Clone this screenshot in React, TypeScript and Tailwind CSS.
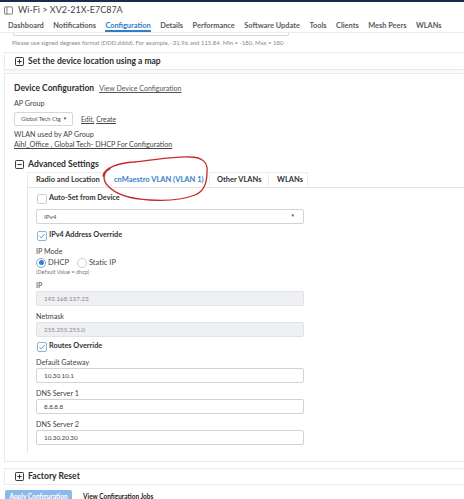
import React from 'react';

const tabs = ['Dashboard', 'Notifications', 'Configuration', 'Details', 'Performance', 'Software Update', 'Tools', 'Clients', 'Mesh Peers', 'WLANs'];

function Check({ checked }: { checked?: boolean }) {
  return (
    <span
      className={`w-[10px] h-[10px] rounded-[2px] border bg-white flex items-center justify-center shrink-0 ${
        checked ? 'border-[#8fb3d9]' : 'border-[#c9cfd6]'
      }`}
    >
      {checked && (
        <svg viewBox="0 0 10 10" className="w-[8px] h-[8px]">
          <path d="M1.8 5.2 L4.1 7.4 L8.3 2.4" fill="none" stroke="#5b8fc7" strokeWidth="1.2" />
        </svg>
      )}
    </span>
  );
}

function BoxIcon({ minus }: { minus?: boolean }) {
  return (
    <svg viewBox="0 0 10 10" className="w-[9px] h-[9px] shrink-0">
      <rect x="0.6" y="0.6" width="8.8" height="8.8" rx="0.8" fill="none" stroke="#333" strokeWidth="1.1" />
      <path d="M2.6 5 H7.4" stroke="#333" strokeWidth="1.2" />
      {!minus && <path d="M5 2.6 V7.4" stroke="#333" strokeWidth="1.2" />}
    </svg>
  );
}

function Field({ label, value, disabled, first }: { label: string; value: string; disabled?: boolean; first?: boolean }) {
  return (
    <div className={first ? 'mt-[4px]' : 'mt-[5px]'}>
      <div className="text-[7.2px] leading-[11px] text-[#444]">{label}</div>
      <div
        className={`w-[268px] h-[15px] rounded-[2px] border px-[7px] flex items-center text-[6.3px] ${
          disabled ? 'bg-[#eff0f2] border-[#dfe2e6] text-[#8a8a8a]' : 'bg-white border-[#cfd4da] text-[#444]'
        }`}
      >
        {value}
      </div>
    </div>
  );
}

export default function App() {
  return (
    <div className="relative w-[464px] h-[499px] overflow-hidden bg-white font-['Lato',sans-serif] text-[#333] whitespace-nowrap">
      <div className="h-[2px] bg-[#1b2b4b]" />

      {/* title */}
      <div className="h-[16px] flex items-center pl-[4px] gap-[5px]">
        <svg viewBox="0 0 10 10" className="w-[9px] h-[9px]">
          <rect x="0.6" y="1" width="8.8" height="8" rx="0.6" fill="none" stroke="#666" strokeWidth="0.9" />
          <path d="M3.3 1 V9" stroke="#666" strokeWidth="0.9" />
        </svg>
        <span className="text-[9px] text-[#444]">Wi-Fi &gt; XV2-21X-E7C87A</span>
      </div>

      {/* top tabs */}
      <div className="h-[15px] flex gap-[9.5px] pl-[8px] border-b border-[#ededed]">
        {tabs.map((t) => (
          <div
            key={t}
            className={`h-full flex items-start pt-[2px] text-[7.4px] font-bold ${
              t === 'Configuration' ? 'text-[#2f7cc7] border-b-[2px] border-[#2f7cc7]' : 'text-[#5a5a5a]'
            }`}
          >
            {t}
          </div>
        ))}
      </div>

      {/* scrolled input remainder */}
      <div className="ml-[13px] w-[276px] h-[3px] border-l border-r border-b border-[#d4d8dc] rounded-b-[2px]" />
      <div className="pl-[12px] mt-[3px] text-[6px] leading-[8px] text-[#8a8a8a]">
        Please use signed degrees format (DDD.dddd). For example, -31.96 and 115.84. Min = -180, Max = 180
      </div>

      {/* map card */}
      <div className="ml-[4px] mt-[5px] h-[18px] border border-r-0 border-[#eaeaea] flex items-center gap-[4px] pl-[10px] shadow-[0_2px_3px_rgba(0,0,0,0.04)]">
        <BoxIcon />
        <span className="text-[8.5px] font-bold text-[#2e2e2e]">Set the device location using a map</span>
      </div>

      {/* device configuration card */}
      <div className="ml-[4px] mt-[3px] border border-r-0 border-[#eaeaea] pl-[9px] pt-[8px] pb-[8px]">
        <div className="flex items-baseline gap-[5px] leading-[12px]">
          <span className="text-[8.5px] font-bold text-[#2e2e2e]">Device Configuration</span>
          <span className="text-[7px] text-[#555] underline">View Device Configuration</span>
        </div>
        <div className="mt-[4px] text-[7.2px] leading-[11px] text-[#444]">AP Group</div>
        <div className="mt-[3px] flex items-center gap-[8px]">
          <div className="w-[59px] h-[14px] border border-[#d4d8dc] rounded-[2px] flex items-center pl-[6px] gap-[2px] text-[5.8px] text-[#555]">
            Global Tech Ctg <span className="text-[4.5px]">▼</span>
          </div>
          <span className="text-[6.8px] text-[#444] underline">Edit,</span>
          <span className="-ml-[6px] text-[6.8px] text-[#444] underline">Create</span>
        </div>
        <div className="mt-[4px] text-[7.2px] leading-[10px] text-[#444]">WLAN used by AP Group</div>
        <div className="text-[7.2px] leading-[10px] text-[#444] underline">Aihl_Office , Global Tech- DHCP For Configuration</div>

        <div className="mt-[8px] flex items-center gap-[4px] pl-[1px] leading-[12px]">
          <BoxIcon minus />
          <span className="text-[8.6px] font-bold text-[#2e2e2e]">Advanced Settings</span>
        </div>

        <div className="ml-[13px] mt-[2px]">
          {/* inner tabs */}
          <div className="h-[16px] flex border-b border-[#e4e4e4] text-[7.5px] font-bold">
            <div className="w-[79px] pl-[8px] flex items-center border-t border-l border-r border-[#ececec] text-[#333]">
              Radio and Location
            </div>
            <div className="w-[103px] pl-[8px] flex items-center text-[#3a80c6] bg-white">cnMaestro VLAN (VLAN 1)</div>
            <div className="w-[59px] pl-[7px] flex items-center border-t border-l border-[#ececec] text-[#333]">Other VLANs</div>
            <div className="w-[40px] pl-[8px] flex items-center border-t border-l border-r border-[#ececec] text-[#333]">WLANs</div>
          </div>

          {/* panel */}
          <div className="border-l border-[#e4e4e4] pl-[8px] pt-[5px] pb-[8px]">
            <div className="flex items-center gap-[2px] h-[11px] pl-[1px]">
              <Check />
              <span className="text-[7.3px] font-bold text-[#333]">Auto-Set from Device</span>
            </div>
            <div className="mt-[5px] w-[268px] h-[15px] border border-[#cfd4da] rounded-[2px] pl-[7px] pr-[8px] flex items-center justify-between text-[6.3px] text-[#555]">
              <span>IPv4</span>
              <span className="text-[4.5px]">▼</span>
            </div>
            <div className="mt-[6px] flex items-center gap-[2px] h-[11px] pl-[1px]">
              <Check checked />
              <span className="text-[7.3px] font-bold text-[#333]">IPv4 Address Override</span>
            </div>
            <div className="mt-[5px] text-[7.2px] leading-[11px] text-[#444]">IP Mode</div>
            <div className="h-[11px] flex items-center text-[7.5px] text-[#444]">
              <span className="w-[10px] h-[10px] rounded-full border border-[#7fa8d8] flex items-center justify-center">
                <span className="w-[5px] h-[5px] rounded-full bg-[#3f7ec4]" />
              </span>
              <span className="ml-[2px]">DHCP</span>
              <span className="ml-[8px] w-[10px] h-[10px] rounded-full border border-[#c9cfd6]" />
              <span className="ml-[2px]">Static IP</span>
            </div>
            <div className="text-[5.5px] leading-[8px] text-[#777]">(Default Value = dhcp)</div>

            <Field label="IP" value="192.168.137.23" disabled first />
            <Field label="Netmask" value="255.255.255.0" disabled />
            <div className="mt-[4px] flex items-center gap-[2px] h-[11px] pl-[1px]">
              <Check checked />
              <span className="text-[7.3px] font-bold text-[#333]">Routes Override</span>
            </div>
            <Field label="Default Gateway" value="10.30.10.1" />
            <Field label="DNS Server 1" value="8.8.8.8" />
            <Field label="DNS Server 2" value="10.30.20.30" />
          </div>
        </div>
      </div>

      {/* factory reset */}
      <div className="ml-[4px] mt-[6px] h-[17px] border border-r-0 border-[#eaeaea] flex items-center gap-[4px] pl-[10px]">
        <BoxIcon />
        <span className="text-[8.6px] font-bold text-[#2e2e2e]">Factory Reset</span>
      </div>

      {/* footer buttons */}
      <div className="mt-[5px] flex items-center gap-[11px] pl-[5px] h-[13px]">
        <div className="w-[67px] h-[13px] rounded-[2px] bg-[#8cb9eb] text-white text-[6.5px] font-bold flex items-center justify-center">
          Apply Configuration
        </div>
        <div className="text-[6.5px] font-bold text-[#222]">View Configuration Jobs</div>
      </div>

      {/* red hand-drawn loop */}
      <svg className="absolute left-0 top-0 pointer-events-none" width="464" height="499" viewBox="0 0 464 499">
        <path
          d="M103 176 C104 168 118 163 134 162 C155 160 175 156 190 157 C203 157 208 163 207 172 C207 183 203 192 195 195 C182 200 165 201 150 200 C132 199 116 195 108 186 C102 180 103 172 110 169"
          fill="none"
          stroke="#c62a2a"
          strokeWidth="1.3"
          strokeLinecap="round"
        />
      </svg>
    </div>
  );
}
